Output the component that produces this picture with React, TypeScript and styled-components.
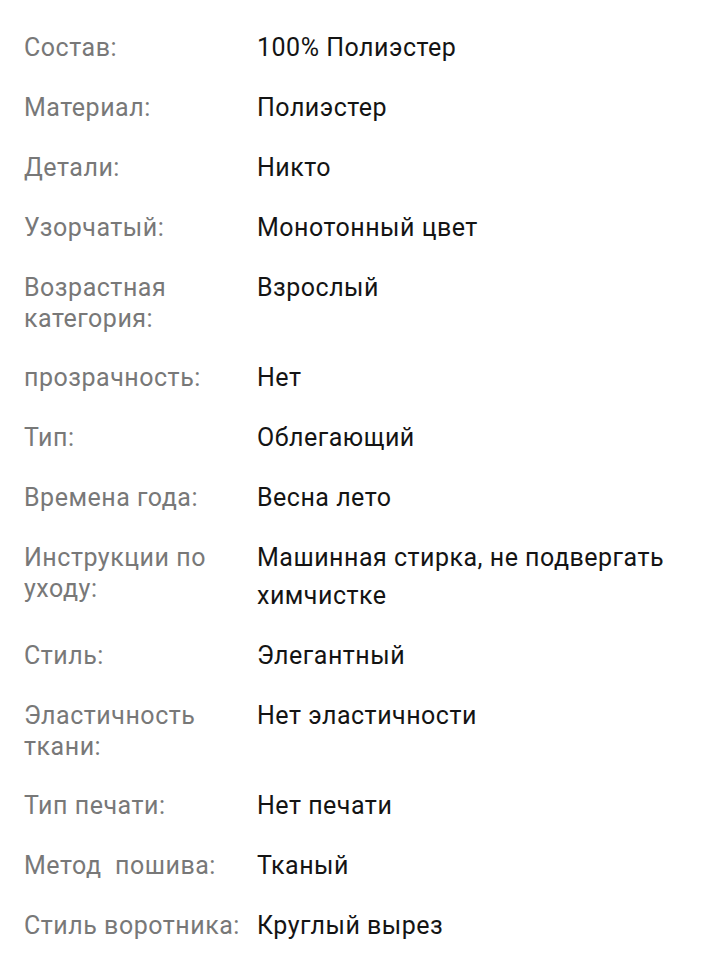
import React from "react";
import styled, { createGlobalStyle } from "styled-components";

const GlobalStyle = createGlobalStyle`
  html, body {
    margin: 0;
    padding: 0;
    background: #ffffff;
  }
  body {
    font-family: Roboto, "Noto Sans", "Liberation Sans", sans-serif;
    -webkit-font-smoothing: antialiased;
  }
`;

const Page = styled.div`
  width: 720px;
  min-height: 955px;
  box-sizing: border-box;
  padding: 29px 24px 0 24px;
  background: #ffffff;
`;

const List = styled.dl`
  margin: 0;
  display: flex;
  flex-direction: column;
  gap: 22.5px;
`;

const Row = styled.div`
  display: grid;
  grid-template-columns: 225px 1fr;
  column-gap: 8px;
  align-items: start;
`;

const Label = styled.dt`
  margin: 0;
  padding: 3px 0 2px 0;
  font-size: 25px;
  line-height: 31.25px;
  letter-spacing: 0.52px;
  color: #787878;
  white-space: pre-wrap;
`;

const Value = styled.dd`
  margin: 0;
  font-size: 25px;
  line-height: 37.5px;
  letter-spacing: 0.5px;
  color: #141414;
`;

const specs: [string, string][] = [
  ["Состав:", "100% Полиэстер"],
  ["Материал:", "Полиэстер"],
  ["Детали:", "Никто"],
  ["Узорчатый:", "Монотонный цвет"],
  ["Возрастная категория:", "Взрослый"],
  ["прозрачность:", "Нет"],
  ["Тип:", "Облегающий"],
  ["Времена года:", "Весна лето"],
  ["Инструкции по уходу:", "Машинная стирка, не подвергать химчистке"],
  ["Стиль:", "Элегантный"],
  ["Эластичность ткани:", "Нет эластичности"],
  ["Тип печати:", "Нет печати"],
  ["Метод  пошива:", "Тканый"],
  ["Стиль воротника:", "Круглый вырез"],
];

export default function App() {
  return (
    <>
      <GlobalStyle />
      <Page>
        <List>
          {specs.map(([label, value]) => (
            <Row key={label}>
              <Label>{label}</Label>
              <Value>{value}</Value>
            </Row>
          ))}
        </List>
      </Page>
    </>
  );
}
